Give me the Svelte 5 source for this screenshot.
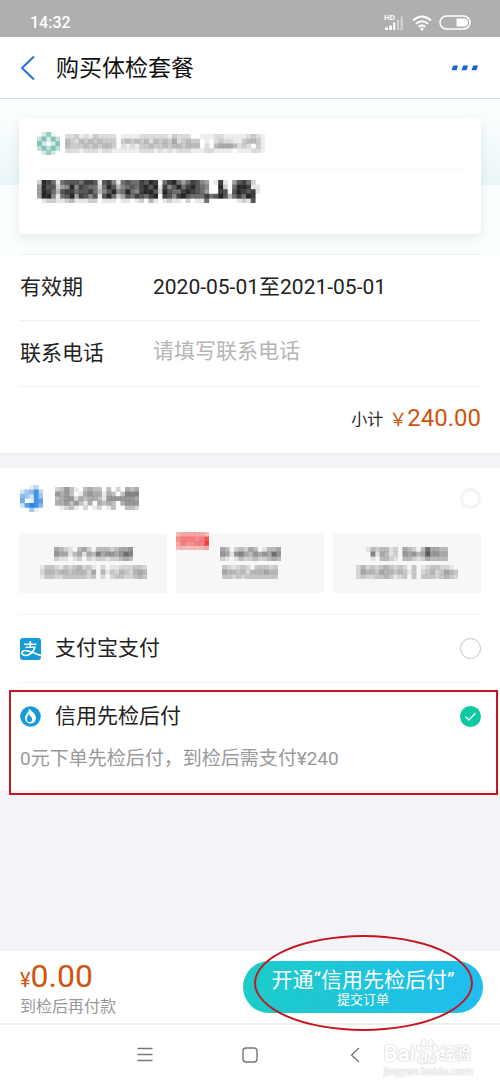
<script lang="ts">
  let phone = $state("");
  let method = $state("credit");

  // pixelated labels: every digit is the darkness of one cell
  const providerIcon = ["02510", "36263", "62026", "36363", "02520"];
  const provider = [
    "2231213222201111222222132220011122111112321",
    "4324343433303434342434352343301023221134431",
    "4333434344302121334334344344402045554232031",
    "2221222122111111222121212221112211110111221",
  ];
  const product = [
    "298616777688717851676687980689646875401810478620",
    "497724595876626973567689791857968976500920699811",
    "498637886778635795696589972976689876400870798781",
    "499516794875717962476876890875897666867973686980",
    "012211231112201110110120310121102011600000012170",
  ];
  const huabeiIcon = ["00130", "24583", "54284", "60187", "27985", "00410"];
  const huabei = [
    "235310343303020434",
    "545301454414303666",
    "345524344315555554",
    "445353140434304555",
    "012310201201300332",
  ];

  const plans = [
    {
      top: ["43210342033323445", "54413414364554576", "21101202122122343"],
      topWidth: 79,
      sub: ["13321323423102011222332", "24434434442504132432454", "13322333332302023322343"],
      subWidth: 107,
      hot: false,
    },
    {
      top: ["4302324301334", "5415643545475", "2101322322343"],
      topWidth: 61,
      sub: ["321232033323", "544342444544", "332323333333"],
      subWidth: 56,
      hot: true,
    },
    {
      top: ["132331204320374433", "061431205453485544", "010332103321243333"],
      topWidth: 82,
      sub: ["2423234323203012332210", "2544354434313023423543", "2322334312303033323432"],
      subWidth: 102,
      hot: false,
    },
  ];
  const hotTag = ["3444443", "5666568", "4655669", "3333334"];
</script>

{#snippet mosaic(rows: string[], width: number, height: number, color: string)}
  <svg {width} {height} viewBox="0 0 {rows[0].length} {rows.length}" preserveAspectRatio="none" aria-hidden="true">
    {#each rows as row, y}
      {#each row as cell, x}
        <rect {x} {y} width="1.05" height="1.05" fill={color} fill-opacity={Number(cell) / 10} />
      {/each}
    {/each}
  </svg>
{/snippet}

<div class="page">
  <div class="status">
    <span class="clock">14:32</span>
    <div class="status-icons">
      <svg width="21" height="17" viewBox="0 0 21 17" fill="#fff">
        <text class="hd" x="0" y="6">HD</text>
        <path d="M1 13.500h3V16H1zM5.300 11.500h2.500V16H5.300zM9.200 8.500h2V16h-2z" />
        <path d="M12.800 5.500h2.300V16h-2.300zM16.500 2.500h2.500V16h-2.500z" opacity=".4" />
      </svg>
      <svg width="20" height="16" viewBox="0 0 20 16" fill="none" stroke="#fff" stroke-width="1.900">
        <path d="M1 5.400q9-7.600 18 0M3.900 8.700q6.100-5 12.200 0M6.700 11.700q3.300-2.500 6.600 0" />
        <circle cx="10" cy="14" r="1.600" fill="#fff" stroke="none" />
      </svg>
      <svg width="32" height="15" viewBox="0 0 32 15">
        <rect x="1" y="1" width="30" height="13" rx="6.500" fill="none" stroke="#fff" stroke-width="1.500" />
        <path d="M17.500 3.500h7.500a4 4 0 0 1 0 8h-7.500z" fill="#fff" />
      </svg>
    </div>
  </div>

  <header class="header">
    <button class="back" aria-label="返回">
      <svg width="16" height="26" viewBox="0 0 16 26" fill="none" stroke="#2474cf" stroke-width="2">
        <path d="M14 1.500 2 13l12 11.500" />
      </svg>
    </button>
    <h1>购买体检套餐</h1>
    <button class="more" aria-label="更多">
      <svg width="28" height="6" viewBox="0 0 28 6" fill="#1565cb">
        <path d="M2.200.5H7L5.500 5.200H.5zM12.200.5H17l-1.500 4.700h-5zM22.200.5H27l-1.500 4.700h-5z" />
      </svg>
    </button>
  </header>

  <main>
    <section class="hero">
      <div class="card">
        <div class="card-provider">
          {@render mosaic(providerIcon, 23, 23, "#2d9c87")}
          {@render mosaic(provider, 200, 19, "#555")}
        </div>
        <div class="card-product">
          {@render mosaic(product, 223, 23, "#111")}
        </div>
      </div>
    </section>

    <section class="details">
      <div class="row">
        <span class="row-label">有效期</span>
        <span>2020-05-01至2021-05-01</span>
      </div>
      <div class="row">
        <label class="row-label" for="phone">联系电话</label>
        <input id="phone" type="tel" placeholder="请填写联系电话" bind:value={phone} />
      </div>
      <div class="subtotal">
        <span class="subtotal-label">小计</span>
        <span class="yuan">￥</span><span class="amount">240.00</span>
      </div>
    </section>

    <section class="methods">
      <div class="method">
        <label class="method-head first">
          <span class="method-icon">{@render mosaic(huabeiIcon, 23, 27, "#1676dd")}</span>
          <span class="method-name">{@render mosaic(huabei, 84, 23, "#333")}</span>
          <input class="faint" type="radio" name="method" value="huabei" bind:group={method} />
        </label>
        <div class="plans">
          {#each plans as p}
            <button class="plan">
              {@render mosaic(p.top, p.topWidth, 14, "#333")}
              {@render mosaic(p.sub, p.subWidth, 14, "#555")}
              {#if p.hot}
                <span class="hot">{@render mosaic(hotTag, 33, 18, "#f02b2b")}</span>
              {/if}
            </button>
          {/each}
        </div>
      </div>

      <div class="method">
        <label class="method-head">
          <span class="method-icon">
            <svg width="21" height="22" viewBox="0 0 21 22">
              <rect width="21" height="22" rx="3" fill="#159bd9" />
              <path d="M4 6.200h12.500M10.300 3v6.300M5.500 9.300h9.500C13.500 14 9.500 17.500 5.800 17.500c-2.300 0-3.800-1-3.800-2.500s1.300-2.500 3.300-2.500c3.700 0 8.200 2.600 15.700 5.200" fill="none" stroke="#fff" stroke-width="1.600" />
            </svg>
          </span>
          <span class="method-name">支付宝支付</span>
          <input type="radio" name="method" value="alipay" bind:group={method} />
        </label>
      </div>

      <div class="method">
        <label class="method-head">
          <span class="method-icon">
            <svg width="21" height="21" viewBox="0 0 21 21">
              <circle cx="10.500" cy="10.500" r="10.300" fill="#159bd9" />
              <path d="M9 2.800c2.300 2 7 4.800 7 9.300a5.500 5.500 0 0 1-11 0c0-3.600 3.800-5.300 4-9.300z" fill="#fff" />
              <path d="M8.800 7.500c.5 2.200 3.400 3.300 3.400 5.800a2.700 2.700 0 0 1-5.400 0c0-2.100 1.900-3.300 2-5.800z" fill="#159bd9" />
            </svg>
          </span>
          <span class="method-name">信用先检后付</span>
          <input type="radio" name="method" value="credit" bind:group={method} />
        </label>
        <p class="method-desc">0元下单先检后付，到检后需支付¥240</p>
        <div class="mark-box"></div>
      </div>
    </section>
  </main>

  <footer class="checkout">
    <div class="total">
      <div class="total-price"><span class="total-yuan">¥</span>0.00</div>
      <div class="total-note">到检后再付款</div>
    </div>
    <div class="submit-wrap">
      <button class="submit">
        <span class="submit-title">开通“信用先检后付”</span>
        <span class="submit-sub">提交订单</span>
      </button>
      <div class="mark-oval"></div>
    </div>
  </footer>

  <nav class="navbar">
    <button aria-label="菜单">
      <svg width="16" height="16" viewBox="0 0 16 16" stroke="#777" stroke-width="1.300"><path d="M.5 1.500h15M.5 7.500h15M.5 13.500h15" /></svg>
    </button>
    <button aria-label="主页">
      <svg width="16" height="16" viewBox="0 0 16 16" fill="none" stroke="#777" stroke-width="1.400"><rect x="1" y="1" width="14" height="14" rx="3" /></svg>
    </button>
    <button aria-label="后退">
      <svg width="16" height="16" viewBox="0 0 16 16" fill="none" stroke="#777" stroke-width="1.300"><path d="M12 1 4.500 8l7.500 7" /></svg>
    </button>
    <div class="watermark">
      <div class="brand">
        <span>Bai</span>
        <span class="paw">
          <svg width="24" height="28" viewBox="0 0 26 30" fill="#fff" stroke="#ddd" stroke-width="1">
            <ellipse cx="4" cy="11" rx="2.800" ry="4" />
            <ellipse cx="9.500" cy="5.500" rx="2.800" ry="4" />
            <ellipse cx="17" cy="5.500" rx="2.800" ry="4" />
            <ellipse cx="22" cy="11" rx="2.800" ry="4" />
            <path d="M13 11.500c4 0 5 4 8 7s3.500 9.500-2 9.500c-3 0-4-1-6-1s-3 1-6 1c-5.500 0-5-6.500-2-9.500s4-7 8-7z" />
          </svg>
          <span class="du">du</span>
        </span>
        <span class="brand-cn">经验</span>
      </div>
      <div class="site">jingyan.baidu.com</div>
    </div>
  </nav>
</div>

<style>
  :global(body) { margin: 0; background: #f3f3f8; }
  .page {
    min-height: 100vh;
    display: flex;
    flex-direction: column;
    background: #f3f3f8;
    color: #222;
    font-family: Roboto, "Noto Sans CJK SC", sans-serif;
    font-size: 21px;
  }
  svg { display: block; flex-shrink: 0; }
  button {
    padding: 0;
    border: 0;
    background: none;
    font: inherit;
    color: inherit;
    cursor: pointer;
  }

  .status {
    box-sizing: border-box;
    height: 37px;
    padding: 8px 29px 0 30px;
    display: flex;
    align-items: center;
    justify-content: space-between;
    background: #afafaf;
    color: #fff;
  }
  .clock { font-size: 16px; font-weight: 500; }
  .status-icons { display: flex; align-items: center; gap: 7px; }
  .hd { font-size: 8px; font-weight: 700; }

  .header {
    height: 61px;
    padding: 0 21px 0 20px;
    display: flex;
    align-items: center;
    gap: 20px;
    background: #fff;
    border-bottom: 1px solid #dcdcdc;
  }
  h1 {
    flex: 1;
    margin: 0;
    padding-bottom: 4px;
    font-size: 23px;
    font-weight: 400;
    color: #111;
  }

  main { flex: 1; }
  .hero {
    padding: 19px 19px 20px;
    background:
      linear-gradient(#fbfefe 20%, #eaf6f9) top / 100% 86px no-repeat,
      #fbfefe;
  }
  .card {
    padding: 0 18px;
    border-radius: 6px;
    background: #fff;
    box-shadow: 0 4px 12px rgba(60, 90, 90, 0.12);
  }
  .card-provider {
    height: 51px;
    display: flex;
    align-items: center;
    gap: 5px;
    border-bottom: 1px solid #f8f8f8;
  }
  .card-product { height: 54px; padding-top: 10px; }

  .details { padding: 0 19px; background: #fff; border-bottom: 1px solid #ebebef; }
  .row {
    box-sizing: border-box;
    height: 66px;
    padding-bottom: 6px;
    display: flex;
    align-items: center;
    border-top: 1px solid #f1f1f1;
  }
  .row-label { width: 134px; padding-left: 1px; box-sizing: border-box; }
  .row input {
    flex: 1;
    min-width: 0;
    padding: 0;
    border: 0;
    outline: 0;
    background: none;
    font: inherit;
    color: inherit;
  }
  .row input::placeholder { color: #b5b5b5; opacity: 1; }
  .subtotal {
    height: 62px;
    padding-bottom: 4px;
    display: flex;
    align-items: center;
    justify-content: flex-end;
    border-top: 1px solid #f1f1f1;
  }
  .subtotal-label { margin-right: 6px; font-size: 16px; }
  .yuan { font-size: 18px; color: #d0540f; }
  .amount { font-size: 24px; color: #d0540f; }

  .methods { margin-top: 14px; padding: 0 19px; background: #fff; }
  .method { position: relative; border-top: 1px solid #f3f3f1; }
  .method:first-child { border-top: 0; }
  .method-head {
    height: 67px;
    display: flex;
    align-items: center;
    cursor: pointer;
  }
  .method-head.first { height: 61px; }
  .method-icon { width: 36px; padding-left: 1px; box-sizing: border-box; }
  .method-name { flex: 1; padding-bottom: 5px; }
  .first .method-name { padding-bottom: 0; }
  .method-head input {
    appearance: none;
    width: 21px;
    height: 21px;
    margin: 0;
    border: 1px solid #c4c4c4;
    border-radius: 50%;
    background: #fff;
  }
  .method-head input.faint { border: 3px solid #f3f3f3; }
  .method-head input:checked {
    border: 0;
    background: #0cc9a2 url("data:image/svg+xml,%3Csvg xmlns='http://www.w3.org/2000/svg' viewBox='0 0 21 21' fill='none' stroke='white' stroke-width='1.300'%3E%3Cpath d='M5.500 10.500l3.500 3.500 6.500-7'/%3E%3C/svg%3E") center / 21px no-repeat;
  }
  .method-desc {
    margin: 0;
    padding: 0 0 22px 1px;
    font-size: 19px;
    line-height: 18px;
    color: #999;
  }
  .plans {
    padding: 4px 0 21px;
    display: grid;
    grid-template-columns: repeat(3, 1fr);
    gap: 9px;
  }
  .plan {
    position: relative;
    height: 60px;
    display: flex;
    flex-direction: column;
    align-items: center;
    justify-content: center;
    gap: 4px;
    background: #f7f7f7;
  }
  .hot { position: absolute; top: -1px; left: 0; }

  .mark-box {
    position: absolute;
    inset: 7px -17px -5px -10px;
    border: 2px solid #c4161f;
    pointer-events: none;
  }
  .mark-oval {
    position: absolute;
    inset: -26px 10px -18px 11px;
    border: 2px solid #c4161f;
    border-radius: 50%;
    pointer-events: none;
  }

  .checkout {
    height: 72px;
    padding: 0 17px 0 20px;
    display: flex;
    align-items: center;
    justify-content: space-between;
    background: #fff;
    border-bottom: 2px solid #eee;
  }
  .total { padding-top: 2px; }
  .total-price { font-size: 32px; line-height: 34px; color: #d0540f; }
  .total-yuan { font-size: 20px; }
  .total-note { font-size: 16px; line-height: 20px; color: #999; }
  .submit-wrap { position: relative; z-index: 1; width: 240px; }
  .submit {
    width: 100%;
    height: 52px;
    display: flex;
    flex-direction: column;
    align-items: center;
    justify-content: center;
    border-radius: 26px;
    background: linear-gradient(100deg, #1ccdc6, #20bdf2);
    color: #fff;
  }
  .submit-title { line-height: 26px; }
  .submit-sub { font-size: 13px; line-height: 14px; }

  .navbar {
    position: relative;
    height: 59px;
    padding: 0 92px;
    display: flex;
    align-items: center;
    justify-content: space-around;
    background: #fff;
  }
  .watermark {
    position: absolute;
    right: 27px;
    bottom: 6px;
    color: #fff;
    text-shadow: 0 0 1px #ccc, 0 0 1px #ccc, 0 0 2px #ddd;
  }
  .brand { display: flex; align-items: flex-end; font-size: 22px; font-weight: 700; line-height: 24px; }
  .paw { position: relative; }
  .du { position: absolute; left: 5px; bottom: 0; font-size: 13px; line-height: 16px; }
  .brand-cn { font-size: 16px; }
  .site { font-size: 11px; line-height: 12px; }
</style>
